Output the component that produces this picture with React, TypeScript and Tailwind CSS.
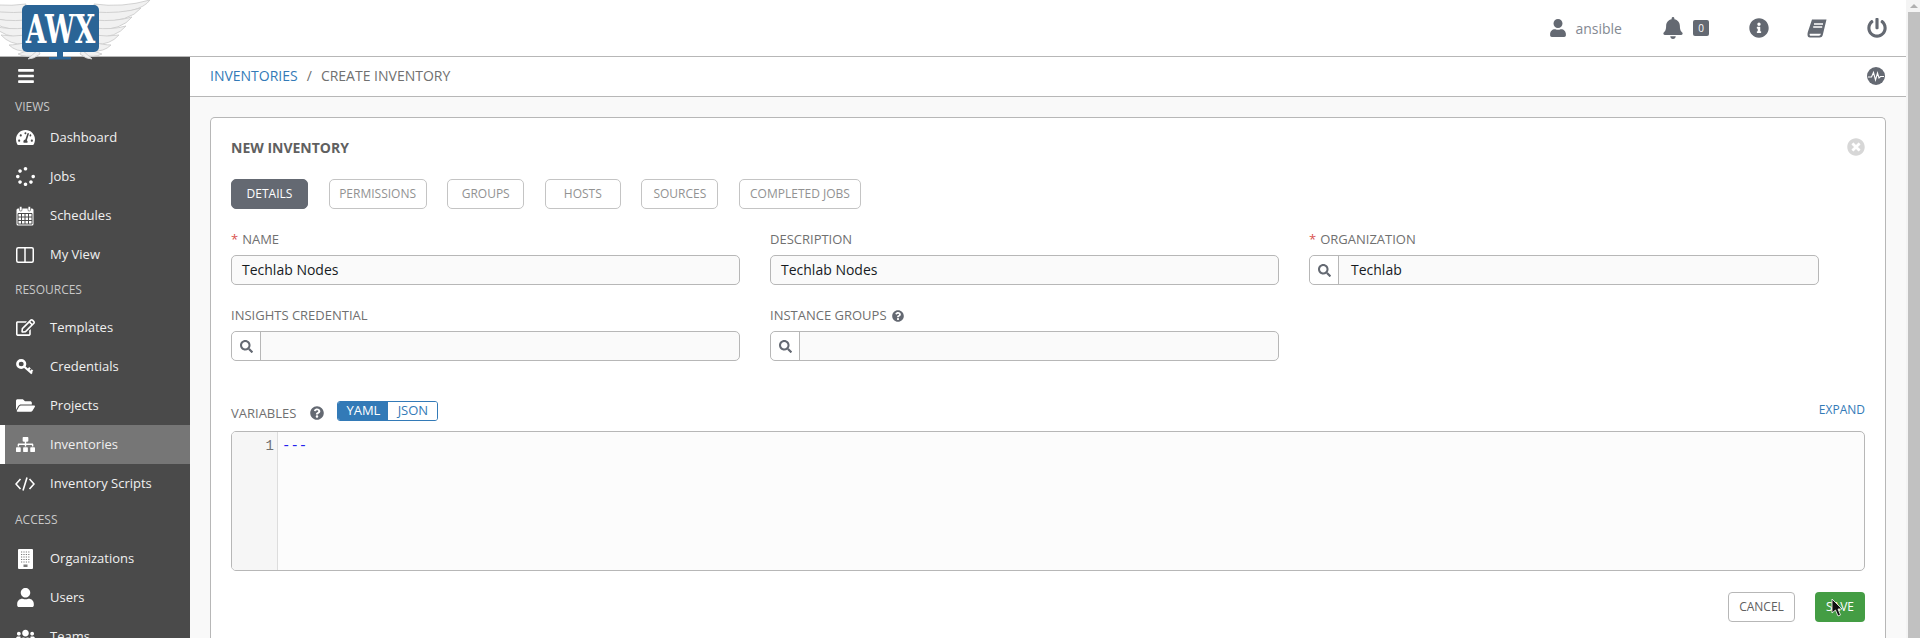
import type { ReactNode } from "react";
import {
  FaBars,
  FaBell,
  FaFolderOpen,
  FaInfoCircle,
  FaPowerOff,
  FaQuestionCircle,
  FaRegEdit,
  FaSearch,
  FaSitemap,
  FaSpinner,
  FaTachometerAlt,
  FaTimesCircle,
  FaUser,
  FaUsers,
} from "react-icons/fa";

// feathers of one wing, the other side is the same thing mirrored
const Wing = () => (
  <g fill="#f1f1f1" stroke="#cdcdcd" strokeWidth="0.9">
    <path d="M94 4 Q122 8 150 0 Q140 14 96 14 Z" />
    <path d="M94 12 Q120 14 141 8 Q130 22 96 22 Z" />
    <path d="M94 20 Q115 22 132 17 Q122 30 96 30 Z" />
    <path d="M94 28 Q112 30 126 26 Q116 38 96 37 Z" />
    <path d="M94 35 Q108 37 119 35 Q110 45 96 44 Z" />
    <path d="M92 42 Q104 45 111 45 Q104 52 92 51 Z" />
    <path d="M86 48 Q96 52 102 54 Q94 58 84 55 Z" />
    <path d="M82 50 Q88 55 92 59 Q86 59 80 54 Z" />
  </g>
);

const Logo = () => (
  <div className="absolute left-0 top-0 z-10 h-[61px] w-[152px]">
    <svg viewBox="0 0 152 61" className="absolute inset-0 h-full w-full">
      <Wing />
      <g transform="translate(120 0) scale(-1 1)">
        <Wing />
      </g>
      <rect x="57" y="50" width="6" height="8" fill="#2a6496" />
      <rect x="49" y="57" width="22" height="2.5" fill="#2a6496" />
    </svg>
    <div className="absolute left-[22px] top-[5px] flex h-[47px] w-[77px] items-center justify-center rounded-[5px] bg-[#2a6496]">
      <span className="scale-x-[0.66] font-['DejaVu_Serif',serif] text-[40px] font-bold leading-none text-white">AWX</span>
    </div>
  </div>
);

const CalendarIcon = () => (
  <svg viewBox="0 0 18 20" className="h-[20px] w-[18px]">
    <rect x="0.5" y="2.5" width="17" height="17" rx="1.5" fill="#fff" />
    <rect x="3.5" y="0.5" width="2.5" height="4.5" rx="1" fill="#fff" stroke="#4a4a4a" strokeWidth="0.6" />
    <rect x="12" y="0.5" width="2.5" height="4.5" rx="1" fill="#fff" stroke="#4a4a4a" strokeWidth="0.6" />
    <path d="M2 7.5 H16 V18 H2 Z M2 11 H16 M2 14.5 H16 M5.5 7.5 V18 M9 7.5 V18 M12.5 7.5 V18" fill="none" stroke="#4a4a4a" strokeWidth="1" />
  </svg>
);

const ColumnsIcon = () => (
  <svg viewBox="0 0 18 16" className="h-[16px] w-[18px]" fill="none" stroke="#fff" strokeWidth="1.5">
    <rect x="0.75" y="0.75" width="16.5" height="14.5" rx="1.5" />
    <path d="M9 1 V15" />
  </svg>
);

const KeyIcon = () => (
  <svg viewBox="0 0 18 16" className="h-[16px] w-[18px]" fill="none" stroke="#fff">
    <ellipse cx="5.2" cy="5" rx="3.8" ry="3.6" strokeWidth="2.6" />
    <path d="M8 7.5 L16 14.5 M12 11 L14 8.8 M14.5 13 L16.5 11" strokeWidth="2.2" />
  </svg>
);

const BuildingIcon = () => (
  <svg viewBox="0 0 15 20" className="h-[20px] w-[15px]">
    <rect width="15" height="20" rx="1" fill="#fff" />
    <path
      d="M3 3 H12 M3 5.5 H12 M3 8 H12 M3 10.5 H12 M3 13 H12"
      stroke="#7a7a7a"
      strokeWidth="1.2"
      strokeDasharray="1.2 1.2"
    />
    <rect x="5.5" y="15.5" width="4" height="2.5" fill="#7a7a7a" />
  </svg>
);

const CodeIcon = () => (
  <svg viewBox="0 0 20 14" className="h-[14px] w-[20px]" fill="none" stroke="#fff" strokeWidth="1.6">
    <path d="M5.5 2 L1 7 L5.5 12 M14.5 2 L19 7 L14.5 12 M12 0.5 L8 13.5" />
  </svg>
);

const BookIcon = () => (
  <svg viewBox="0 0 20 19" className="ml-[38px] h-[19px] w-[20px]">
    <path d="M5 0.5 H19.5 L16 15 Q15.5 18.5 12.5 18.5 H3 Q0.3 18.5 0.5 15 Q0.5 14 1 12.5 Z" fill="#646972" />
    <path d="M7 5 H16 M6.2 8 H15.2" stroke="#fff" strokeWidth="1.3" />
    <path d="M2.7 14.8 H14 Q13.4 16.6 12 16.8 H3.2 Q2.2 16.4 2.7 14.8 Z" fill="#fff" />
  </svg>
);

const SectionLabel = ({ children, className }: { children: ReactNode; className: string }) => (
  <div className={`px-[15px] text-[12px] leading-[16px] text-[#c8c8c8] ${className}`}>{children}</div>
);

const NavItem = ({ icon, label, active }: { icon: ReactNode; label: string; active?: boolean }) => (
  <div
    className={`flex h-[39px] shrink-0 items-center text-[13px] text-[#f0f0f0] ${
      active ? "border-l-[5px] border-white bg-[#767676] pl-[10px]" : "pl-[15px]"
    }`}
  >
    <span className="flex w-[20px] items-center justify-center text-[19px] text-white">{icon}</span>
    <span className="ml-[15px]">{label}</span>
  </div>
);

const Sidebar = () => (
  <aside className="flex h-full w-[190px] shrink-0 flex-col overflow-hidden bg-[#4a4a4a]">
    <div className="flex h-[39px] shrink-0 items-center pb-[2px] pl-[17px] text-[18px] text-white">
      <FaBars />
    </div>
    <SectionLabel className="mt-[3px]">VIEWS</SectionLabel>
    <div className="mt-[3px] flex flex-col">
      <NavItem icon={<FaTachometerAlt />} label="Dashboard" />
      <NavItem icon={<FaSpinner />} label="Jobs" />
      <NavItem icon={<CalendarIcon />} label="Schedules" />
      <NavItem icon={<ColumnsIcon />} label="My View" />
    </div>
    <SectionLabel className="mt-[8px]">RESOURCES</SectionLabel>
    <div className="mt-[10px] flex flex-col">
      <NavItem icon={<FaRegEdit />} label="Templates" />
      <NavItem icon={<KeyIcon />} label="Credentials" />
      <NavItem icon={<FaFolderOpen />} label="Projects" />
      <NavItem icon={<FaSitemap />} label="Inventories" active />
      <NavItem icon={<CodeIcon />} label="Inventory Scripts" />
    </div>
    <SectionLabel className="mt-[9px]">ACCESS</SectionLabel>
    <div className="mt-[11px] flex flex-col">
      <NavItem icon={<BuildingIcon />} label="Organizations" />
      <NavItem icon={<FaUser />} label="Users" />
      <NavItem icon={<FaUsers />} label="Teams" />
    </div>
  </aside>
);

const TopBar = () => (
  <header className="relative flex h-[57px] shrink-0 items-center justify-end border-b border-[#b7b7b7] bg-white pr-[19px] text-[#646972]">
    <Logo />
    <FaUser className="text-[18px]" />
    <span className="ml-[8px] text-[14px] text-[#848992]">ansible</span>
    <FaBell className="ml-[40px] text-[22px]" />
    <span className="ml-[9px] flex h-[16px] w-[16px] items-center justify-center rounded-[2px] bg-[#646972] text-[10px] text-white">0</span>
    <FaInfoCircle className="ml-[40px] text-[20px]" />
    <BookIcon />
    <FaPowerOff className="ml-[40px] text-[20px]" />
  </header>
);

const Tab = ({ label, width, active }: { label: string; width: string; active?: boolean }) => (
  <div
    className={`flex h-[30px] items-center justify-center rounded-[5px] border text-[12px] ${width} ${
      active ? "border-[#646972] bg-[#646972] text-white" : "border-[#c4c4c4] bg-white text-[#929292]"
    }`}
  >
    {label}
  </div>
);

const FieldLabel = ({ children, required }: { children: ReactNode; required?: boolean }) => (
  <div className="flex h-[16px] items-center text-[13px] text-[#707070]">
    {required && <span className="mr-[4px] text-[#d9534f]">*</span>}
    {children}
  </div>
);

const TextField = ({ value }: { value: string }) => (
  <div className="mt-[7px] flex h-[30px] items-center rounded-[5px] border border-[#b7b7b7] bg-[#fafafa] pb-[1px] pl-[10px] text-[14px] text-[#161b1f]">
    {value}
  </div>
);

const LookupField = ({ value }: { value?: string }) => (
  <div className="mt-[7px] flex h-[30px] items-center rounded-[5px] border border-[#b7b7b7] bg-[#fafafa] text-[14px] text-[#161b1f]">
    <span className="flex h-full w-[29px] shrink-0 items-center justify-center rounded-l-[5px] border-r border-[#b7b7b7] bg-white text-[13px] text-[#646972]">
      <FaSearch />
    </span>
    <span className="pb-[1px] pl-[12px]">{value}</span>
  </div>
);

const Cursor = () => (
  <svg viewBox="0 0 12 20" className="absolute left-[1831px] top-[598px] z-10 h-[20px] w-[12px]">
    <path d="M1 1 L1 15 L4.5 12 L7 18 L9.5 17 L7 11 L11 11 Z" fill="#111" stroke="#fff" strokeWidth="0.8" />
  </svg>
);

const InventoryForm = () => (
  <section className="mx-[20px] mt-[20px] flex-1 rounded-t-[5px] border border-b-0 border-[#b7b7b7] bg-white px-[20px] pt-[19px]">
    <div className="flex h-[20px] items-center justify-between">
      <h2 className="text-[14px] font-bold text-[#606060]">NEW INVENTORY</h2>
      <FaTimesCircle className="text-[18px] text-[#d7d7d7]" />
    </div>
    <div className="mt-[22px] flex gap-[20.6px]">
      <Tab label="DETAILS" width="w-[77px]" active />
      <Tab label="PERMISSIONS" width="w-[98px]" />
      <Tab label="GROUPS" width="w-[77px]" />
      <Tab label="HOSTS" width="w-[76px]" />
      <Tab label="SOURCES" width="w-[77px]" />
      <Tab label="COMPLETED JOBS" width="w-[122px]" />
    </div>
    <div className="mt-[23px] grid w-[1588px] grid-cols-[509px_509px_510px] gap-x-[30px] gap-y-[23px]">
      <div>
        <FieldLabel required>NAME</FieldLabel>
        <TextField value="Techlab Nodes" />
      </div>
      <div>
        <FieldLabel>DESCRIPTION</FieldLabel>
        <TextField value="Techlab Nodes" />
      </div>
      <div>
        <FieldLabel required>ORGANIZATION</FieldLabel>
        <LookupField value="Techlab" />
      </div>
      <div>
        <FieldLabel>INSIGHTS CREDENTIAL</FieldLabel>
        <LookupField />
      </div>
      <div>
        <FieldLabel>
          INSTANCE GROUPS
          <FaQuestionCircle className="ml-[5px] text-[12px] text-[#646972]" />
        </FieldLabel>
        <LookupField />
      </div>
    </div>
    <div className="mt-[40px] flex h-[20px] items-center">
      <span className="mt-[5px] text-[13px] text-[#707070]">VARIABLES</span>
      <FaQuestionCircle className="ml-[14px] mt-[4px] text-[14px] text-[#646972]" />
      <div className="ml-[13px] flex h-[20px] w-[101px] overflow-hidden rounded-[3px] border border-[#337ab7] text-[13px]">
        <span className="flex w-[50px] items-center justify-center bg-[#337ab7] text-white">YAML</span>
        <span className="flex flex-1 items-center justify-center bg-white text-[#337ab7]">JSON</span>
      </div>
      <span className="ml-auto -mt-[3px] text-[12px] text-[#337ab7]">EXPAND</span>
    </div>
    <div className="mt-[10px] flex h-[140px] overflow-hidden rounded-[5px] border border-[#b7b7b7] bg-[#fcfcfc] font-['Liberation_Mono',monospace] text-[14px] leading-[20px]">
      <div className="w-[46px] shrink-0 border-r border-[#dddddd] bg-[#f6f6f6] pr-[3px] pt-[4px] text-right text-[#707070]">1</div>
      <div className="pl-[4px] pt-[4px] text-[#2222ee]">---</div>
    </div>
    <div className="mt-[21px] flex justify-end gap-[20px]">
      <div className="flex h-[30px] w-[67px] items-center justify-center rounded-[4px] border border-[#b7b7b7] bg-white text-[12px] text-[#606060]">CANCEL</div>
      <div className="flex h-[30px] w-[50px] items-center justify-center rounded-[4px] bg-[#449d44] text-[12px] text-white">SAVE</div>
    </div>
  </section>
);

export default function App() {
  return (
    <div className="relative flex h-[638px] w-[1920px] overflow-hidden bg-white font-['Open_Sans',sans-serif]">
      <div className="flex h-full min-w-0 flex-1 flex-col">
        <TopBar />
        <div className="flex min-h-0 flex-1">
          <Sidebar />
          <main className="flex min-w-0 flex-1 flex-col bg-[#f9f9f9]">
            <div className="flex h-[40px] shrink-0 items-center justify-between border-b border-[#b7b7b7] bg-white pb-[2px] pl-[20px] pr-[21px] text-[14px]">
              <div className="flex items-center">
                <span className="text-[#337ab7]">INVENTORIES</span>
                <span className="mx-[9px] text-[#707070]">/</span>
                <span className="text-[#707070]">CREATE INVENTORY</span>
              </div>
              <svg viewBox="0 0 18 18" className="h-[18px] w-[18px]">
                <circle cx="9" cy="9" r="9" fill="#646972" />
                <path d="M1 10 H4.5 L6.5 5.5 L8.5 13 L10.5 6 L12 11 L13.5 9.5 H17" fill="none" stroke="#fff" strokeWidth="1.1" />
              </svg>
            </div>
            <InventoryForm />
          </main>
        </div>
      </div>
      <div className="flex h-full w-[14px] shrink-0 flex-col items-end bg-[#f4f4f4]">
        <div className="flex h-[12px] w-[12px] items-center justify-center">
          <div className="h-0 w-0 border-x-[4px] border-b-[4px] border-x-transparent border-b-[#b0b0b0]" />
        </div>
        <div className="h-full w-[12px] bg-[#c1c1c1]" />
      </div>
      <Cursor />
    </div>
  );
}
